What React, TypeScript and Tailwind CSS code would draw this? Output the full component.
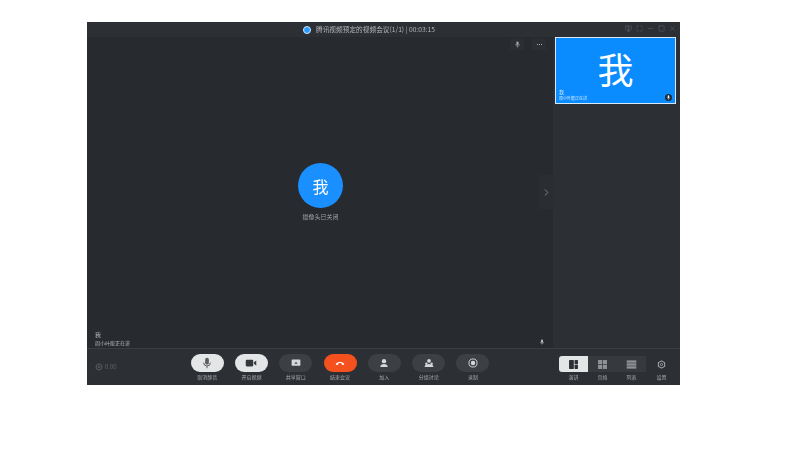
import React from "react";
import { ChevronRight, Minus, Square, X, Maximize, MonitorUp } from "lucide-react";

const font = "font-['Noto_Sans_CJK_SC','Liberation_Sans',sans-serif]";

type IconProps = { className?: string };

const MicIcon = ({ className }: IconProps) => (
  <svg viewBox="0 0 16 16" className={className} fill="currentColor">
    <rect x="5.5" y="1" width="5" height="9" rx="2.5" />
    <path d="M3.5 7.5a4.5 4.5 0 0 0 9 0M8 12v3" fill="none" stroke="currentColor" strokeWidth="1.3" />
  </svg>
);
const VideoIcon = ({ className }: IconProps) => (
  <svg viewBox="0 0 16 16" className={className} fill="currentColor">
    <rect x="1" y="3.5" width="10" height="9" rx="1.5" />
    <path d="M12 7l3-2.5v7L12 9z" />
  </svg>
);
const ShareIcon = ({ className }: IconProps) => (
  <svg viewBox="0 0 16 16" className={className} fill="currentColor">
    <path d="M2 2.5h12a1 1 0 0 1 1 1v8a1 1 0 0 1-1 1H2a1 1 0 0 1-1-1v-8a1 1 0 0 1 1-1zM8 6l-2.5 3h5z" fillRule="evenodd" />
  </svg>
);
const HangupIcon = ({ className }: IconProps) => (
  <svg viewBox="0 0 16 16" className={className} fill="currentColor">
    <path d="M1 9.5C4.5 5.5 11.5 5.5 15 9.5l-2.2 2-2.3-1.5V8.5c-1.7-.6-3.3-.6-5 0V10L3.2 11.5z" />
  </svg>
);
const PersonIcon = ({ className }: IconProps) => (
  <svg viewBox="0 0 16 16" className={className} fill="currentColor">
    <circle cx="8" cy="5" r="3.5" />
    <path d="M2 14.5c0-3.5 2.5-5 6-5s6 1.5 6 5z" />
  </svg>
);
const GroupIcon = ({ className }: IconProps) => (
  <svg viewBox="0 0 16 16" className={className} fill="currentColor">
    <circle cx="8" cy="4.5" r="3" />
    <circle cx="3.8" cy="9" r="2" />
    <circle cx="12.2" cy="9" r="2" />
    <path d="M1 14.5c0-2.5 1-3.5 3-3.5 2-2 6-2 8 0 2 0 3 1 3 3.5z" />
  </svg>
);
const RecordIcon = ({ className }: IconProps) => (
  <svg viewBox="0 0 16 16" className={className} fill="currentColor">
    <circle cx="8" cy="8" r="6.5" fill="none" stroke="currentColor" strokeWidth="1.5" />
    <circle cx="8" cy="8" r="3.5" />
  </svg>
);
const SpeakerIcon = ({ className }: IconProps) => (
  <svg viewBox="0 0 16 16" className={className} fill="currentColor">
    <rect x="1.5" y="1.5" width="7" height="13" rx="1" />
    <rect x="9.5" y="1.5" width="5" height="6" rx="1" />
    <rect x="9.5" y="8.5" width="5" height="6" rx="1" />
  </svg>
);
const GridIcon = ({ className }: IconProps) => (
  <svg viewBox="0 0 16 16" className={className} fill="currentColor">
    <rect x="1.5" y="1.5" width="6" height="6" />
    <rect x="8.5" y="1.5" width="6" height="6" />
    <rect x="1.5" y="8.5" width="6" height="6" />
    <rect x="8.5" y="8.5" width="6" height="6" />
  </svg>
);
const RowsIcon = ({ className }: IconProps) => (
  <svg viewBox="0 0 16 16" className={className} fill="currentColor">
    <rect x="1" y="2" width="14" height="3.4" />
    <rect x="1" y="6.3" width="14" height="3.4" />
    <rect x="1" y="10.6" width="14" height="3.4" />
  </svg>
);
const GearIcon = ({ className }: IconProps) => (
  <svg viewBox="0 0 16 16" className={className}>
    <path d="M8 1.5l5.6 3.25v6.5L8 14.5l-5.6-3.25v-6.5z" fill="none" stroke="currentColor" strokeWidth="1.8" strokeLinejoin="round" />
    <circle cx="8" cy="8" r="2" fill="none" stroke="currentColor" strokeWidth="1.5" />
  </svg>
);

const controls = [
  { label: "取消静音", Icon: MicIcon, size: "h-[12px] w-[12px]", cls: "bg-[#e4e5e6] text-[#5a5d62]" },
  { label: "开启视频", Icon: VideoIcon, size: "h-[12px] w-[12px]", cls: "bg-[#e4e5e6] text-[#33363b]" },
  { label: "共享窗口", Icon: ShareIcon, size: "h-[10px] w-[10px]", cls: "bg-[#3c3f44] text-[#d6d7d9]" },
  { label: "结束会议", Icon: HangupIcon, size: "h-[10px] w-[10px]", cls: "bg-[#f4511e] text-white" },
  { label: "加入", Icon: PersonIcon, size: "h-[10px] w-[10px]", cls: "bg-[#3c3f44] text-[#d6d7d9]" },
  { label: "分组讨论", Icon: GroupIcon, size: "h-[10px] w-[10px]", cls: "bg-[#3c3f44] text-[#d6d7d9]" },
  { label: "录制", Icon: RecordIcon, size: "h-[10px] w-[10px]", cls: "bg-[#3c3f44] text-[#d6d7d9]" },
];

const layouts = [
  { label: "演讲", Icon: SpeakerIcon, active: true },
  { label: "宫格", Icon: GridIcon, active: false },
  { label: "列表", Icon: RowsIcon, active: false },
];

const TitleBar = () => (
  <div className="relative flex h-[15px] items-center bg-[#2c2f34] pl-[216px]">
    <span className="mr-[5px] h-[8px] w-[8px] rounded-full border border-[#cfe8ff] bg-[#2b9bff] blur-[0.3px]" />
    <span className="text-[6.7px] leading-none whitespace-nowrap text-[#b4b6b9] blur-[0.4px]">腾讯视频预定的视频会议(1/1) | 00:03:15</span>
    <div className="absolute right-[4px] top-[3px] flex gap-[4px] text-[#5d6065] blur-[0.3px]">
      <MonitorUp className="h-[7px] w-[7px]" />
      <Maximize className="h-[7px] w-[7px]" />
      <Minus className="h-[7px] w-[7px]" />
      <Square className="h-[7px] w-[7px]" />
      <X className="h-[7px] w-[7px]" />
    </div>
  </div>
);

const MainStage = () => (
  <div className="relative flex w-[466px] flex-col items-center bg-[#272a2f] pl-[1px]">
    <div className="absolute right-[7px] top-[2px] flex items-center gap-[8px] text-[#a6a8ab] blur-[0.3px]">
      <div className="flex h-[11px] w-[14px] items-center justify-center bg-[#2b2e33]">
        <MicIcon className="h-[7px] w-[7px]" />
      </div>
      <div className="flex h-[11px] w-[14px] items-center justify-center gap-[1px] bg-[#2b2e33]">
        <span className="h-[1px] w-[1px] bg-[#a6a8ab]" />
        <span className="h-[1px] w-[1px] bg-[#a6a8ab]" />
        <span className="h-[1px] w-[1px] bg-[#a6a8ab]" />
      </div>
    </div>
    <div className="mt-[126px] flex h-[45px] w-[45px] items-center justify-center rounded-full bg-[#1a8fff] text-[16px] text-white blur-[0.3px]">我</div>
    <div className="mt-[6px] text-[6px] leading-none text-[#a0a2a5] blur-[0.4px]">摄像头已关闭</div>
    <div className="absolute bottom-[2px] left-[8px] text-[#b6b8ba] blur-[0.4px]">
      <div className="text-[6px] leading-[8px]">我</div>
      <div className="text-[5px] leading-[7px]">周小叶能正在讲</div>
    </div>
    <MicIcon className="absolute bottom-[3px] right-[8px] h-[6px] w-[6px] text-[#c4c6c8]" />
    <div className="absolute right-0 top-[138px] flex h-[34px] w-[14px] items-center justify-center bg-[#2a2d32]">
      <ChevronRight className="h-[11px] w-[11px] text-[#85878a] blur-[0.3px]" />
    </div>
  </div>
);

const SidePanel = () => (
  <div className="flex flex-1 flex-col bg-[#2c2f34] pl-[2px]">
    <div className="relative flex h-[67px] w-[121px] items-center justify-center border border-[#d5e9fb] bg-[#0a8cff] pb-[6px] text-[36px] leading-none text-white">
      我
      <div className="absolute bottom-[2px] left-[3px] text-[#d8ecff] blur-[0.4px]">
        <div className="text-[5px] leading-[6px]">我</div>
        <div className="text-[4px] leading-[6px]">周小叶能正在讲</div>
      </div>
      <div className="absolute bottom-[2px] right-[3px] flex h-[7px] w-[7px] items-center justify-center rounded-full bg-[#1d2a38]">
        <MicIcon className="h-[5px] w-[5px] text-white" />
      </div>
    </div>
  </div>
);

const Toolbar = () => (
  <div className="flex h-[37px] items-start border-t border-[#3a3d42] bg-[#2c2f34] pt-[5px]">
    <div className="flex w-[98px] items-center gap-[2px] pl-[8px] pt-[9px] text-[#63666a] blur-[0.3px]">
      <GearIcon className="h-[8px] w-[8px]" />
      <span className="text-[6px] leading-none">0.00</span>
    </div>
    {controls.map(({ label, Icon, size, cls }) => (
      <div key={label} className="flex w-[44.3px] flex-col items-center">
        <div className={`flex h-[18px] w-[33px] items-center justify-center rounded-full ${cls}`}>
          <Icon className={`${size} blur-[0.3px]`} />
        </div>
        <span className="mt-[2px] text-[5px] leading-[6px] text-[#a8aaad] blur-[0.4px]">{label}</span>
      </div>
    ))}
    <div className="ml-[64px] flex pt-[2px]">
      {layouts.map(({ label, Icon, active }) => (
        <div key={label} className="flex w-[29px] flex-col items-center">
          <div className={`flex h-[16px] w-[29px] items-center justify-center ${active ? "rounded-l-[3px] bg-[#e4e5e6] text-[#2c2f34]" : "bg-[#36393e] text-[#8f9194]"}`}>
            <Icon className="h-[11px] w-[11px] blur-[0.3px]" />
          </div>
          <span className="mt-[2px] text-[5px] leading-[6px] text-[#a8aaad] blur-[0.4px]">{label}</span>
        </div>
      ))}
    </div>
    <div className="ml-[1px] flex w-[29px] flex-col items-center pt-[2px]">
      <div className="flex h-[16px] items-center justify-center text-[#a8aaad]">
        <GearIcon className="h-[9px] w-[9px] blur-[0.3px]" />
      </div>
      <span className="mt-[2px] text-[5px] leading-[6px] text-[#a8aaad] blur-[0.4px]">设置</span>
    </div>
  </div>
);

export default function App() {
  return (
    <div className={`h-[455px] w-[800px] overflow-hidden bg-white pl-[87px] pt-[22px] ${font}`}>
      <div className="flex h-[363px] w-[593px] flex-col">
        <TitleBar />
        <div className="flex h-[311px]">
          <MainStage />
          <SidePanel />
        </div>
        <Toolbar />
      </div>
    </div>
  );
}
